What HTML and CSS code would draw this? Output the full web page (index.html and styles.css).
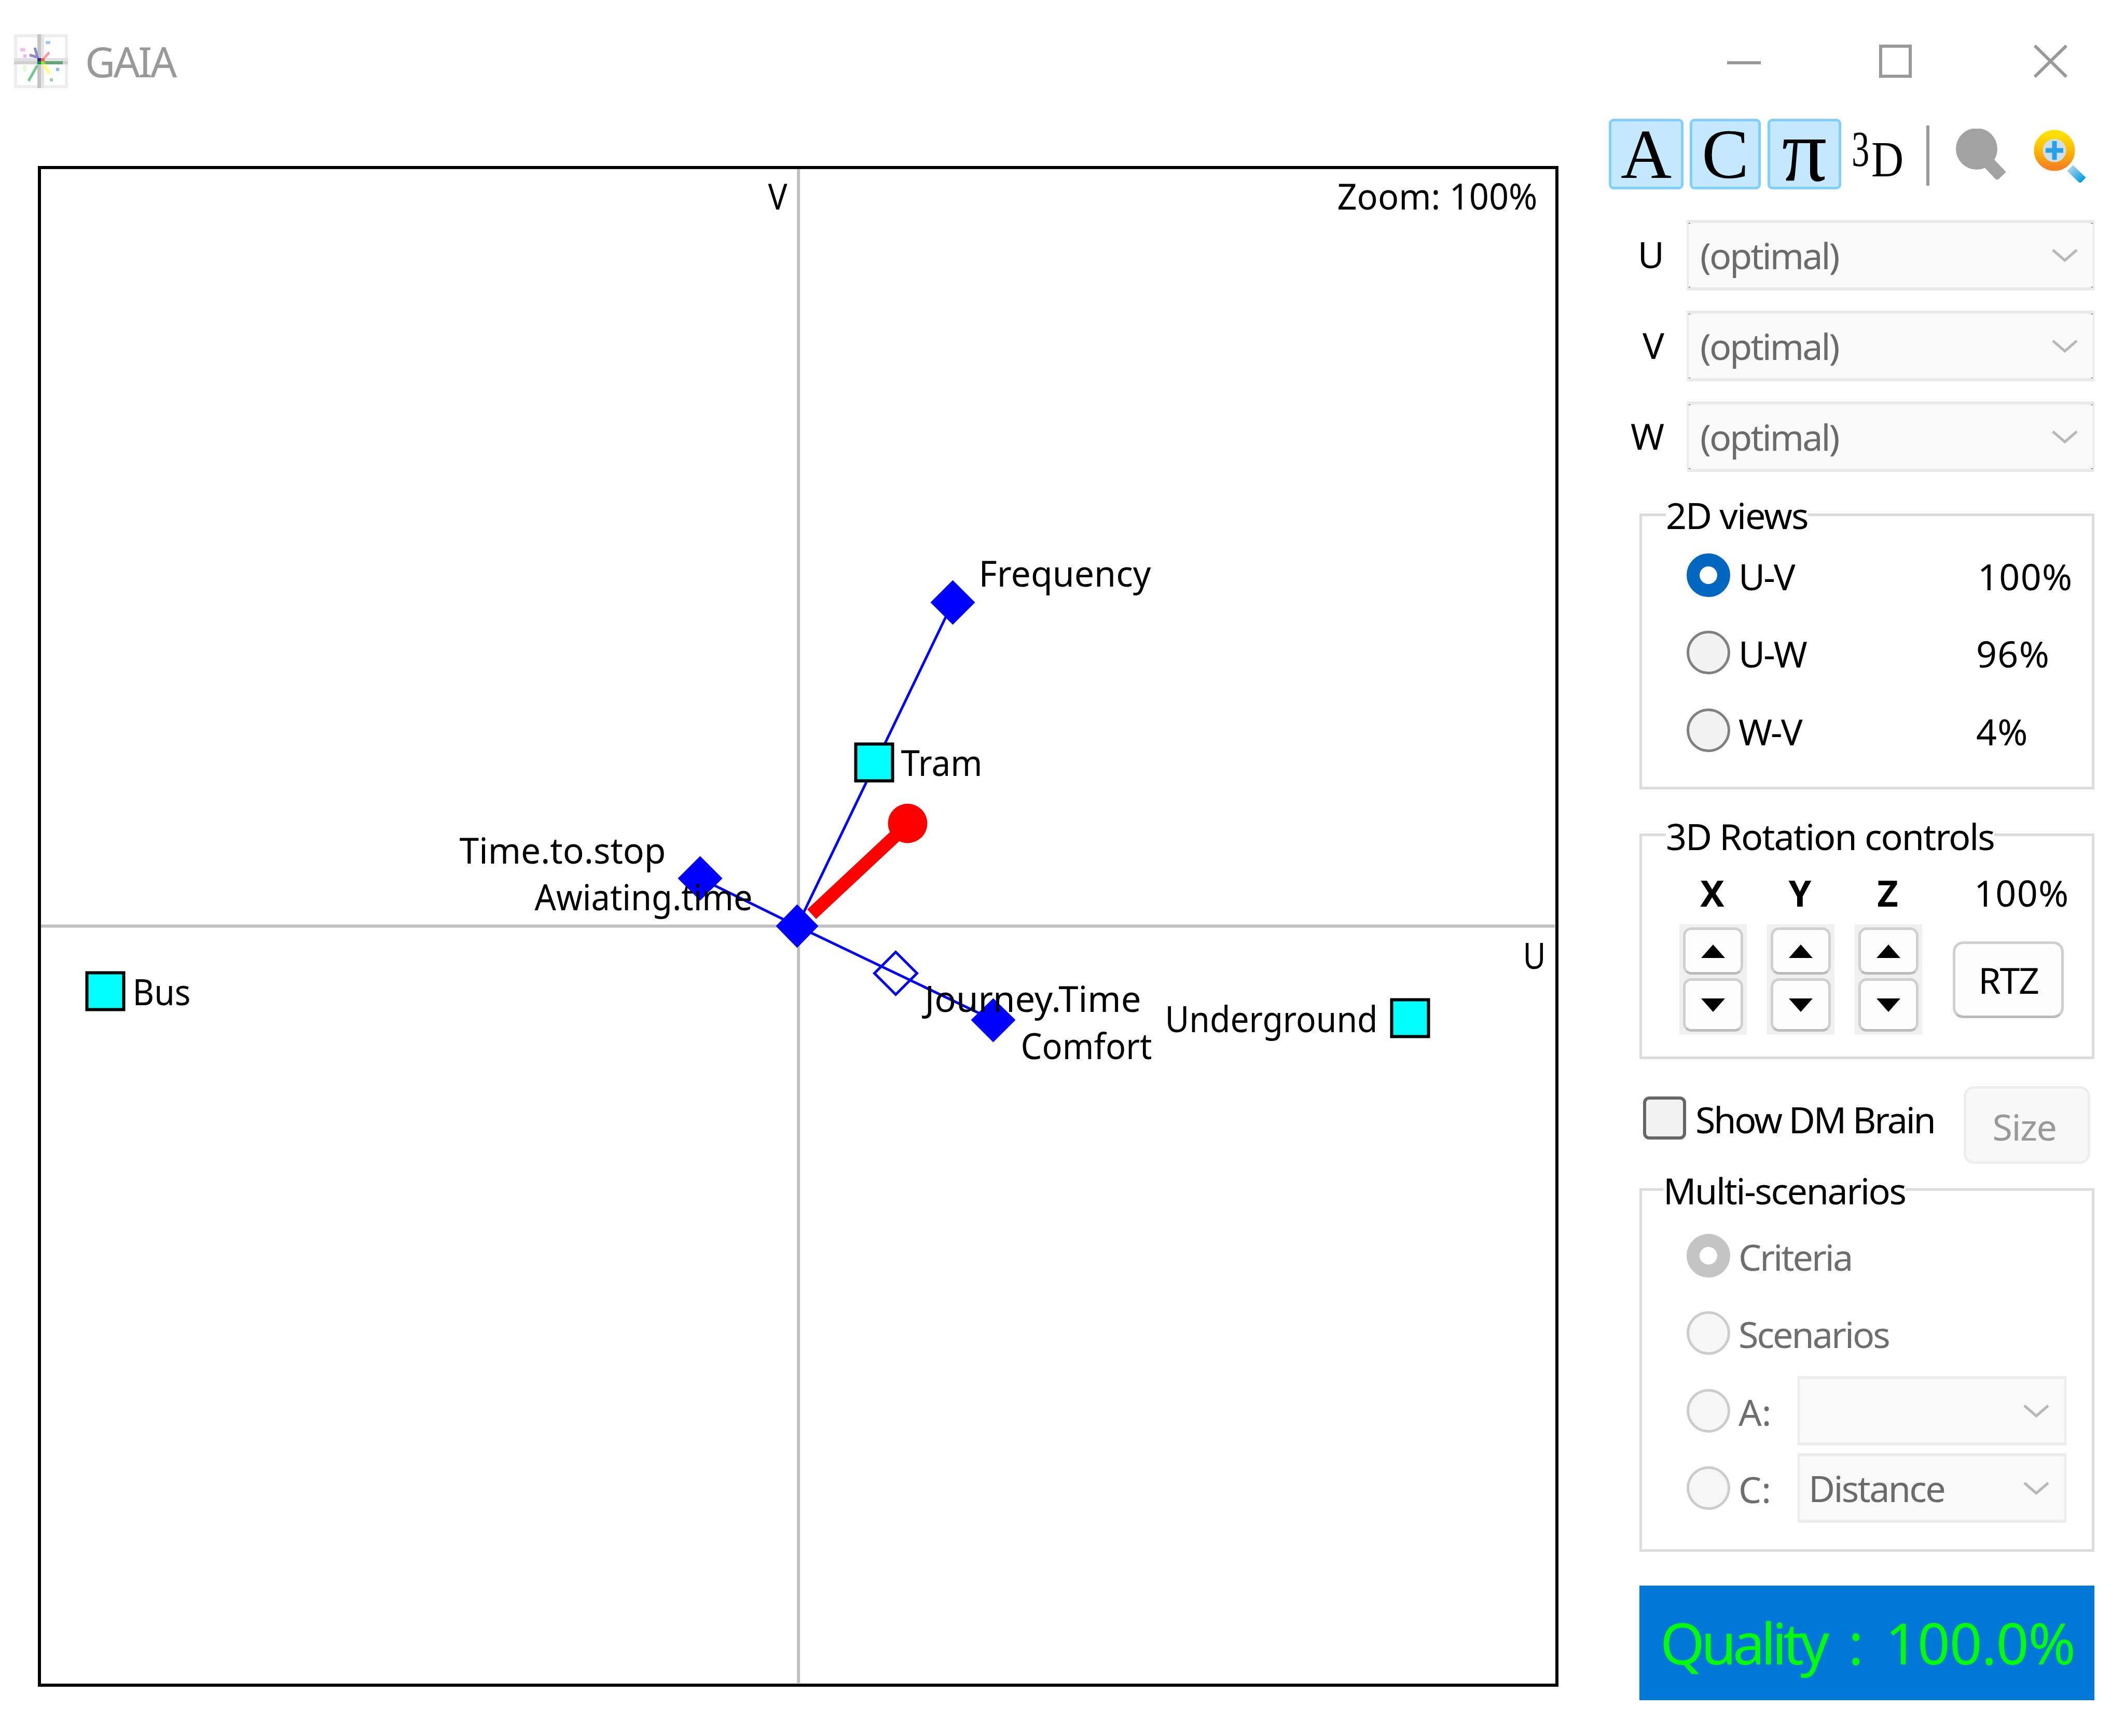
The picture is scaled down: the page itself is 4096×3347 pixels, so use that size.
FILE: index.html
```html
<!DOCTYPE html>
<html lang="en">
<head>
<meta charset="utf-8">
<title>GAIA</title>
<link rel="stylesheet" href="styles.css">
</head>
<body>
<div class="window">
  <header class="titlebar">
    <svg class="app-icon" viewBox="0 0 104 104" aria-hidden="true">
      <rect x="3" y="3" width="98" height="98" fill="#fff" stroke="#eee" stroke-width="6"/>
      <rect x="45" y="0" width="7" height="104" fill="#c4c4c4"/>
      <rect x="52" y="0" width="6" height="104" fill="#e4e4e4"/>
      <rect x="0" y="46" width="104" height="6" fill="#e0e0e0"/>
      <rect x="0" y="52" width="104" height="6" fill="#d0d0d0"/>
      <rect x="58" y="52" width="36" height="6" fill="#5fa874"/>
      <rect x="45" y="46" width="7" height="6" fill="#2a2a8c"/>
      <rect x="52" y="46" width="7" height="6" fill="#f06050"/>
      <rect x="45" y="52" width="7" height="6" fill="#0f8f50"/>
      <rect x="52" y="52" width="7" height="6" fill="#a5d935"/>
      <path d="M46 46 40 26M44 44 30 40" stroke="#8a8ac8" stroke-width="5" fill="none"/>
      <path d="M58 46 68 35" stroke="#ff9c9c" stroke-width="5" fill="none"/>
      <path d="M58 58 68 76" stroke="#ffff80" stroke-width="6" fill="none"/>
      <path d="M45 60 28 90" stroke="#70c890" stroke-width="5" fill="none"/>
      <rect x="12" y="27" width="10" height="6" fill="#ffb8ff"/>
      <rect x="18" y="39" width="6" height="6" fill="#ffa8ff"/>
      <rect x="61" y="13" width="9" height="6" fill="#a8c4ff"/>
      <rect x="81" y="65" width="6" height="6" fill="#90b8ff"/>
      <rect x="18" y="60" width="6" height="12" fill="#e0ffd0"/>
      <rect x="69" y="85" width="6" height="6" fill="#a5cfa8"/>
    </svg>
    <span class="app-title">GAIA</span>
    <div class="win-controls">
      <svg class="ctl" viewBox="0 0 65 64" aria-hidden="true"><path d="M0 35H65" stroke="#999" stroke-width="6"/></svg>
      <svg class="ctl ctl-max" viewBox="0 0 63 64" aria-hidden="true"><rect x="3" y="3" width="57" height="58" fill="none" stroke="#999" stroke-width="6"/></svg>
      <svg class="ctl ctl-close" viewBox="0 0 65 64" aria-hidden="true"><path d="M2 2 63 62M63 2 2 62" stroke="#999" stroke-width="6" fill="none"/></svg>
    </div>
  </header>
  <main class="content">
    <section class="plot">
      <svg class="plot-svg" viewBox="79.5 326.5 2918 2919" aria-label="GAIA plane">
        <path d="M1539.6 326V3246M79 1786H2998" stroke="#c0c0c0" stroke-width="6" fill="none"/>
        <path d="M1537 1786 1837 1162M1350 1694 1537 1786 1915 1967" stroke="#0000ff" stroke-width="5" fill="none"/>
        <polygon class="dia" points="1837,1119 1880,1162 1837,1205 1794,1162"/>
        <polygon class="dia" points="1350,1651 1393,1694 1350,1737 1307,1694"/>
        <polygon class="dia" points="1915,1925 1958,1967 1915,2010 1872,1967"/>
        <polygon class="dia-open" points="1727,1836 1768,1877 1727,1918 1686,1877"/>
        <polygon class="dia" points="1537,1744 1578,1786 1537,1828 1496,1786"/>
        <path d="M1565 1763 1750 1590" stroke="#ff0000" stroke-width="25" fill="none"/>
        <circle cx="1750" cy="1588" r="38" fill="#ff0000"/>
        <rect class="alt" x="1650" y="1435" width="71" height="71"/>
        <rect class="alt" x="168" y="1876" width="71" height="71"/>
        <rect class="alt" x="2683" y="1928" width="71" height="71"/>
        <text class="lbl" x="1887" y="1131" textLength="332" lengthAdjust="spacingAndGlyphs">Frequency</text>
        <text class="lbl" x="1737" y="1496" textLength="157" lengthAdjust="spacingAndGlyphs">Tram</text>
        <text class="lbl" x="886" y="1665" textLength="398" lengthAdjust="spacingAndGlyphs">Time.to.stop</text>
        <text class="lbl" x="1031" y="1755" textLength="420" lengthAdjust="spacingAndGlyphs">Awiating.time</text>
        <text class="lbl" x="1783" y="1951" textLength="417" lengthAdjust="spacingAndGlyphs">Journey.Time</text>
        <text class="lbl" x="1968" y="2042" textLength="253" lengthAdjust="spacingAndGlyphs">Comfort</text>
        <text class="lbl" x="2246" y="1990" textLength="410" lengthAdjust="spacingAndGlyphs">Underground</text>
        <text class="lbl" x="256" y="1938" textLength="112" lengthAdjust="spacingAndGlyphs">Bus</text>
        <text class="lbl" x="1481" y="404" textLength="37" lengthAdjust="spacingAndGlyphs">V</text>
        <text class="lbl" x="2936" y="1868" textLength="44" lengthAdjust="spacingAndGlyphs">U</text>
        <text class="lbl" x="2578" y="404" textLength="386" lengthAdjust="spacingAndGlyphs">Zoom: 100%</text>
      </svg>
    </section>
    <aside class="side">
      <div class="toolbar">
        <span class="tool tool-a">A</span>
        <span class="tool tool-c">C</span>
        <span class="tool tool-p">π</span>
        <span class="tool-3d"><span class="three">3</span><span class="dee">D</span></span>
        <span class="tool-sep"></span>
        <svg class="mag mag-gray" viewBox="0 0 99 98" aria-hidden="true">
          <circle cx="40" cy="39" r="40" fill="#a2a2a2"/>
          <path d="M50 52 88 92" stroke="#a2a2a2" stroke-width="24" fill="none"/>
        </svg>
        <svg class="mag mag-color" viewBox="0 0 104 104" aria-hidden="true">
          <defs>
            <linearGradient id="ringGrad" x1="0" y1="0" x2="0" y2="1">
              <stop offset="0" stop-color="#ffe000"/>
              <stop offset="0.55" stop-color="#ffb400"/>
              <stop offset="1" stop-color="#f5841f"/>
            </linearGradient>
            <linearGradient id="handleGrad" x1="0" y1="0" x2="1" y2="1">
              <stop offset="0" stop-color="#a8d0ea"/>
              <stop offset="1" stop-color="#00a0e0"/>
            </linearGradient>
          </defs>
          <path d="M70 76 95 100" stroke="url(#handleGrad)" stroke-width="16" fill="none"/>
          <circle cx="40" cy="42" r="31" fill="#cfdfea" stroke="url(#ringGrad)" stroke-width="17"/>
          <path d="M40 24V60M23 42H57" stroke="#28a0e8" stroke-width="9" fill="none"/>
        </svg>
      </div>
      <div class="stack">
        <div class="axis-rows">
          <div class="axis-row">
            <span class="axis-name">U</span>
            <div class="combo combo-marked"><span class="combo-text">(optimal)</span><svg class="chev" viewBox="0 0 50 26" aria-hidden="true"><path d="M2 3 25 23 48 3"/></svg></div>
          </div>
          <div class="axis-row">
            <span class="axis-name">V</span>
            <div class="combo combo-marked"><span class="combo-text">(optimal)</span><svg class="chev" viewBox="0 0 50 26" aria-hidden="true"><path d="M2 3 25 23 48 3"/></svg></div>
          </div>
          <div class="axis-row">
            <span class="axis-name">W</span>
            <div class="combo combo-marked"><span class="combo-text">(optimal)</span><svg class="chev" viewBox="0 0 50 26" aria-hidden="true"><path d="M2 3 25 23 48 3"/></svg></div>
          </div>
        </div>

        <div class="group group-2d">
          <span class="group-title">2D views</span>
          <div class="radio-row"><span class="radio radio-on"></span><span class="radio-label">U-V</span><span class="pct pct-wide">100%</span></div>
          <div class="radio-row"><span class="radio"></span><span class="radio-label">U-W</span><span class="pct">96%</span></div>
          <div class="radio-row"><span class="radio"></span><span class="radio-label">W-V</span><span class="pct">4%</span></div>
        </div>

        <div class="group group-3d">
          <span class="group-title">3D Rotation controls</span>
          <div class="rot-grid">
            <span class="rot-head">X</span>
            <span class="rot-head">Y</span>
            <span class="rot-head">Z</span>
            <span class="rot-pct">100%</span>
            <div class="spin"><span class="spin-btn spin-up"><i class="arrow arrow-up"></i></span><span class="spin-btn spin-down"><i class="arrow arrow-down"></i></span></div>
            <div class="spin"><span class="spin-btn spin-up"><i class="arrow arrow-up"></i></span><span class="spin-btn spin-down"><i class="arrow arrow-down"></i></span></div>
            <div class="spin"><span class="spin-btn spin-up"><i class="arrow arrow-up"></i></span><span class="spin-btn spin-down"><i class="arrow arrow-down"></i></span></div>
            <span class="rtz">RTZ</span>
          </div>
        </div>

        <div class="brain-row">
          <span class="check"></span>
          <span class="check-label">Show DM Brain</span>
          <span class="size-btn">Size</span>
        </div>

        <div class="group group-multi">
          <span class="group-title">Multi-scenarios</span>
          <div class="radio-row"><span class="radio radio-dis-on"></span><span class="radio-label dim">Criteria</span></div>
          <div class="radio-row"><span class="radio radio-dis"></span><span class="radio-label dim">Scenarios</span></div>
          <div class="radio-row"><span class="radio radio-dis"></span><span class="radio-label dim short">A:</span><div class="combo combo-small combo-a"><svg class="chev" viewBox="0 0 50 26" aria-hidden="true"><path d="M2 3 25 23 48 3"/></svg></div></div>
          <div class="radio-row"><span class="radio radio-dis"></span><span class="radio-label dim short">C:</span><div class="combo combo-small"><span class="combo-text">Distance</span><svg class="chev" viewBox="0 0 50 26" aria-hidden="true"><path d="M2 3 25 23 48 3"/></svg></div></div>
        </div>

        <div class="quality"><span class="q-word">Quality</span> : 100.0%</div>
      </div>
    </aside>
  </main>
</div>
</body>
</html>
```
FILE: styles.css
```css
* { box-sizing: border-box; }
html, body { margin: 0; padding: 0; background: #fff; }
body { overflow: hidden; font-family: "Noto Sans", "Open Sans", sans-serif; color: #000; }

.window { width: 4096px; height: 3347px; display: flex; flex-direction: column; background: #fff; }

/* title bar */
.titlebar { height: 229px; flex: none; display: flex; align-items: flex-start; padding-left: 27px; }
.app-icon { width: 104px; height: 104px; margin-top: 66px; flex: none; }
.app-title { margin-top: 66px; margin-left: 33px; font-size: 80px; line-height: 104px; color: #999; letter-spacing: -3.5px; }
.win-controls { margin-left: auto; margin-right: 111px; margin-top: 86px; display: flex; }
.ctl { width: 65px; height: 64px; display: block; flex: none; }
.ctl-max { width: 63px; margin-left: 228px; }
.ctl-close { margin-left: 235px; }

/* main */
.content { flex: 1; display: flex; align-items: flex-start; }

.plot { flex: none; width: 2931px; height: 2932px; margin-left: 73px; margin-top: 91px; border: 6.5px solid #000; background: #fff; overflow: hidden; }
.plot-svg { display: block; width: 2918px; height: 2919px; }
.dia { fill: #0000ff; }
.dia-open { fill: none; stroke: #0000ff; stroke-width: 5; }
.alt { fill: #00ffff; stroke: #000; stroke-width: 6; }
.lbl { font-family: "Noto Sans", sans-serif; font-size: 70px; fill: #000; }

/* side panel */
.side { flex: none; width: 936px; margin-left: 97px; }
.toolbar { height: 136px; display: flex; align-items: flex-start; }
.tool { height: 136px; display: flex; align-items: center; justify-content: center; background: #c4e8ff; border: 5.5px solid #80d0ff; border-radius: 9px; font-family: "Liberation Serif", serif; font-size: 136px; line-height: 1; }
.tool-a { width: 144px; }
.tool-c { width: 137px; margin-left: 12px; }
.tool-p { width: 142px; margin-left: 13px; font-size: 172px; padding-bottom: 14px; }
.tool-3d { width: 100px; margin-left: 20px; display: flex; font-family: "Liberation Serif", serif; font-size: 98px; line-height: 98px; }
.three { display: block; flex: none; width: 49px; margin-top: 9px; transform: scaleX(.7); transform-origin: 0 0; }
.dee { display: block; flex: none; width: 71px; margin-left: -11px; margin-top: 29px; transform: scaleX(.88); transform-origin: 0 0; }
.tool-sep { width: 6px; height: 116px; margin-left: 44px; margin-top: 13px; background: #999; }
.mag { display: block; flex: none; margin-top: 19px; }
.mag-gray { width: 99px; height: 98px; margin-left: 51px; }
.mag-color { width: 104px; height: 104px; margin-left: 51px; }

.stack { padding-left: 59px; display: flex; flex-direction: column; }

.axis-rows { margin-top: 59px; display: flex; flex-direction: column; gap: 39px; }
.axis-row { display: flex; align-items: center; }
.axis-name { flex: none; width: 92px; padding: 0 44px 4px 0; font-size: 70px; line-height: 130px; text-align: right; white-space: nowrap; direction: rtl; }
.combo { display: flex; align-items: center; height: 136px; width: 785px; padding-left: 22px; background-color: #f9f9f9; border: solid #eaeaea; border-width: 6px 3px; }
.combo-marked { background-image: linear-gradient(#444, #444), linear-gradient(#444, #444), linear-gradient(#444, #444), linear-gradient(#444, #444); background-origin: border-box; background-clip: border-box; background-repeat: no-repeat; background-size: 6px 7px; background-position: 0 0, 0 100%, 100% 0, 100% 100%; }
.combo-text { font-size: 70px; line-height: 1; color: #6b6b6b; letter-spacing: -3px; }
.chev { flex: none; display: block; margin-left: auto; margin-right: 29px; width: 50px; height: 26px; fill: none; stroke: #b8b8b8; stroke-width: 5; }

.group { position: relative; border: 5.5px solid #dcdcdc; background: #fff; width: 877px; }
.group-title { position: absolute; left: 46px; background: #fff; font-size: 70px; line-height: 72px; letter-spacing: -2px; white-space: nowrap; }
.group-2d { margin-top: 80px; height: 532px; padding: 39px 0 0 86px; }
.group-2d .group-title { top: -38px; }
.group-3d { margin-top: 85px; height: 435px; padding: 86px 0 0 72px; }
.group-3d .group-title { top: -36px; }
.group-multi { margin-top: 47px; height: 701px; padding: 50px 0 0 86px; }
.group-multi .group-title { top: -37px; left: 41px; letter-spacing: -2.4px; }

.radio-row { height: 149.5px; display: flex; align-items: center; }
.radio { flex: none; width: 84px; height: 84px; border-radius: 50%; border: 5px solid #808080; background: #f2f2f2; }
.radio-on { border: 25px solid #0067c0; background: #fff; }
.radio-dis-on { border: 25px solid #c4c4c4; background: #fff; }
.radio-dis { border-color: #ccc; background: #f6f6f6; }
.radio-label { flex: none; margin-left: 16px; width: 458px; padding-top: 4px; font-size: 70px; line-height: 1; letter-spacing: -3px; }
.radio-label.short { width: 114px; letter-spacing: 0; }
.dim { color: #6e6e6e; }
.pct { padding-top: 4px; font-size: 70px; line-height: 1; letter-spacing: 1.3px; }
.pct-wide { margin-left: 3px; }

.rot-grid { display: grid; grid-template-columns: 130px 130px 130px 214px; column-gap: 39px; grid-template-rows: 51px 213px; row-gap: 33px; }
.rot-head { font-size: 70px; font-weight: 700; line-height: 46px; text-align: center; padding-right: 3px; }
.rot-pct { font-size: 70px; line-height: 46px; letter-spacing: 1.3px; margin-left: 61px; white-space: nowrap; }
.spin { background: #f0f0f0; padding: 6px 7px; display: flex; flex-direction: column; height: 213px; gap: 7px; }
.spin-btn { display: flex; align-items: center; justify-content: center; background: #fdfdfd; border: 5px solid #d0d0d0; border-radius: 16px; }
.spin-up { height: 91px; border-bottom-color: #bcbcbc; }
.spin-down { height: 103px; border-bottom-color: #bcbcbc; }
.arrow { display: block; width: 0; height: 0; border-left: 23px solid transparent; border-right: 23px solid transparent; }
.arrow-up { border-bottom: 26px solid #000; }
.arrow-down { border-top: 26px solid #000; }
.rtz { margin: 33px 0 32px 20px; width: 214px; height: 148px; display: flex; align-items: center; justify-content: center; background: #fdfdfd; border: 5px solid #cfcfcf; border-bottom-color: #bcbcbc; border-radius: 20px; font-size: 70px; line-height: 1; letter-spacing: -2.4px; }

.brain-row { margin-top: 52px; height: 150px; width: 877px; display: flex; align-items: flex-start; padding-left: 7px; }
.check { flex: none; width: 83px; height: 83px; margin-top: 20px; background: #f2f2f2; border: 6px solid #666; border-radius: 12px; }
.check-label { margin-left: 18px; font-size: 70px; line-height: 100px; letter-spacing: -3.2px; margin-top: 14px; white-space: nowrap; }
.size-btn { margin-left: auto; margin-right: 8px; width: 244px; height: 150px; display: flex; align-items: center; justify-content: center; background: #f8f8f8; border: 5px solid #eee; border-radius: 20px; color: #999; font-size: 70px; line-height: 1; letter-spacing: -1.5px; padding: 6px 10px 0 0; }

.combo-small { flex: none; width: 518px; height: 134px; background-color: #f9f9f9; border-color: #ececec; border-width: 6px 4px; padding-left: 17px; }
.combo-small .combo-text { letter-spacing: -2.7px; }
.combo-a { background-image: linear-gradient(#888, #888), linear-gradient(#888, #888); background-origin: border-box; background-clip: border-box; background-repeat: no-repeat; background-size: 5px 6px; background-position: 0 0, 0 100%; }

.quality { margin-top: 65px; width: 877px; height: 221px; display: flex; align-items: center; padding: 0 0 4px 40px; background: #0078d7; color: #00ff00; font-size: 110px; line-height: 1; letter-spacing: -1.2px; word-spacing: 16px; white-space: pre; }
.q-word { letter-spacing: -7px; }
```
